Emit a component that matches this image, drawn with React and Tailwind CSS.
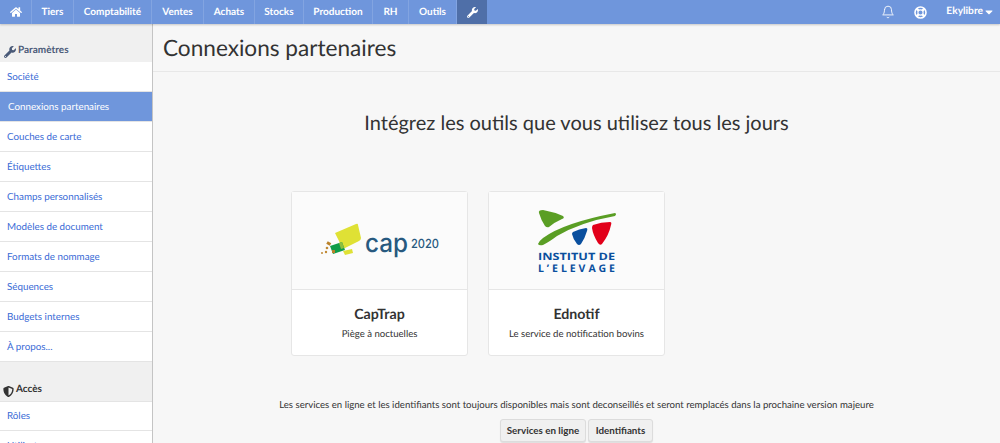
import React from "react";
import { FaHome, FaWrench, FaShieldAlt, FaCaretDown } from "react-icons/fa";
import { LuBell } from "react-icons/lu";

const nav = [
  ["Tiers", "w-[42px]"],
  ["Comptabilité", "w-[78px]"],
  ["Ventes", "w-[52px]"],
  ["Achats", "w-[51px]"],
  ["Stocks", "w-[49px]"],
  ["Production", "w-[69px]"],
  ["RH", "w-[36px]"],
  ["Outils", "w-[48px]"],
];
const links = ["Société", "Connexions partenaires", "Couches de carte", "Étiquettes", "Champs personnalisés", "Modèles de document", "Formats de nommage", "Séquences", "Budgets internes", "À propos..."];

function Ring() {
  return (
    <svg width="13" height="13" viewBox="0 0 13 13" className="mr-[19px]" fill="none" stroke="#fff">
      <circle cx="6.5" cy="6.5" r="5.5" strokeWidth="1.6" />
      <circle cx="6.5" cy="6.5" r="2.6" strokeWidth="1.1" />
      <path d="M2.6 2.6 L4.6 4.6 M10.4 2.6 L8.4 4.6 M2.6 10.4 L4.6 8.4 M10.4 10.4 L8.4 8.4" strokeWidth="2.2" />
    </svg>
  );
}

function CapLogo() {
  return (
    <svg width="130" height="44" viewBox="0 0 130 44">
      <path d="M20 14 L41 5 Q43 4 43 6 L46 19 Q46 21 44 22 L30 29 Q28 30 27 28 Z" fill="#dfe135" />
      <path d="M15 27 L27 23 L30 31 L18 35 Z" fill="#0f9d48" />
      <path d="M24 24 L27 23 L29 29 L26 30 Z" fill="#8fbf3c" />
      <path d="M28 32 L37 30 L38 34 L30 36 Z" fill="#dfe135" />
      <rect x="12" y="23" width="4" height="3" fill="#b9822b" transform="rotate(30 14 24)" />
      <rect x="17" y="31" width="3" height="3" fill="#b9822b" />
      <circle cx="12" cy="29" r="1.3" fill="#c08a35" />
      <circle cx="11" cy="33" r="1.2" fill="#c08a35" />
      <circle cx="7" cy="34" r="1" fill="#c08a35" />
      <text x="50" y="33" fontFamily="Inter, sans-serif" fontSize="26" fontWeight="500" fill="#27597f" textLength="43" lengthAdjust="spacingAndGlyphs">cap</text>
      <text x="96" y="29" fontFamily="Inter, sans-serif" fontSize="12.5" fontWeight="500" fill="#27597f" textLength="28" lengthAdjust="spacingAndGlyphs">2020</text>
    </svg>
  );
}

function IdeleLogo() {
  return (
    <svg width="80" height="64" viewBox="0 0 80 64">
      <path d="M2 4 Q1 1 6 1 Q17 3 26 7 Q28 9 25 10 Q18 13 12 18 Q10 19 8 17 Q4 11 2 4 Z" fill="#5a9e24" />
      <path d="M1 35 Q2 32 6 29 Q26 14 78 4 Q80 5 78 7 Q44 13 20 27 Q12 33 6 36 Q2 37 1 35 Z" fill="#5a9e24" />
      <path d="M36 23 Q42 20 49 19 Q51 19 50 22 Q48 29 44 35 Q42 37 40 35 Q36 30 35 25 Q35 24 36 23 Z" fill="#0a4f9e" />
      <path d="M56 16 Q64 13 73 13 Q75 13 74 16 Q72 26 65 35 Q63 37 61 34 Q56 26 55 19 Q55 17 56 16 Z" fill="#e2001a" />
      <text x="1" y="51" fontFamily="'Open Sans', sans-serif" fontWeight="700" fontSize="10" fill="#0a4f9e" textLength="77" lengthAdjust="spacingAndGlyphs">INSTITUT DE</text>
      <text x="1" y="63" fontFamily="'Open Sans', sans-serif" fontWeight="700" fontSize="10.5" fill="#0a4f9e" textLength="77">L’ELEVAGE</text>
    </svg>
  );
}

function Card({ logo, title, desc }) {
  return (
    <div className="w-[177px] h-[165px] bg-white border border-[#e6e6e6] rounded-[3px] flex flex-col">
      <div className="h-[98px] bg-[#fbfbfb] border-b border-[#e6e6e6] flex items-center justify-center shrink-0">{logo}</div>
      <div className="flex flex-col items-center pt-[15px]">
        <div className="text-[14.2px] leading-[20px] font-bold text-[#333]">{title}</div>
        <div className="text-[9.6px] leading-[16px] mt-[2px] text-[#333]">{desc}</div>
      </div>
    </div>
  );
}

export default function App() {
  return (
    <div className="w-[1000px] h-[443px] overflow-hidden flex flex-col bg-[#f7f7f7] text-[#333] [text-rendering:geometricPrecision]" style={{ fontFamily: "Lato, sans-serif" }}>
      <header className="h-[24px] shrink-0 bg-[#6f96dc] flex items-stretch text-white text-[10px] font-bold shadow-[0_1px_2px_rgba(0,0,0,0.2)] relative z-10">
        <div className="w-[32px] flex items-center justify-center border-r border-[#82a4e1]"><FaHome className="text-[12px]" /></div>
        {nav.map(([n, w]) => (
          <div key={n} className={`${w} flex items-center justify-center border-r border-[#82a4e1]`}>{n}</div>
        ))}
        <div className="w-[30px] flex items-center justify-center bg-[#4f6fa8]"><FaWrench className="text-[11px]" /></div>
        <div className="flex-1" />
        <div className="flex items-center">
          <LuBell className="text-[14px] mr-[19px]" strokeWidth={1.5} />
          <Ring />
          <span className="text-[10.2px]">Ekylibre</span>
          <FaCaretDown className="text-[12px] mr-[5px]" />
        </div>
      </header>

      <div className="flex-1 flex min-h-0">
        <aside className="w-[153px] shrink-0 bg-[#f0f0f0] border-r border-[#c4c4c4] overflow-hidden text-[9.8px]">
          <div className="h-[38px] flex items-end pb-[4px] pl-[4px] gap-[2px] font-bold text-[#4a5a78] text-[10px]">
            <FaWrench className="text-[12px]" /><span>Paramètres</span>
          </div>
          {links.map((l) => {
            const active = l === "Connexions partenaires";
            return (
              <div key={l} className={`h-[30px] flex items-center border-b border-[#e4e4e4] pt-[1px] ${active ? "bg-[#6f96dc] text-white pl-[8px]" : "bg-white text-[#3a6bd6] pl-[7px]"}`}>{l}</div>
            );
          })}
          <div className="h-[39px] flex items-end pb-[4px] pl-[3px] gap-[2px] font-bold text-[#333] text-[10px]">
            <FaShieldAlt className="text-[11px]" /><span>Accès</span>
          </div>
          <div className="h-[30px] flex items-center bg-white text-[#3a6bd6] pl-[7px] border-b border-t border-[#e4e4e4] pt-[1px]">Rôles</div>
          <div className="h-[30px] flex items-center bg-white text-[#3a6bd6] pl-[7px]">Utilisateurs</div>
        </aside>

        <main className="flex-1 min-w-0 flex flex-col">
          <div className="h-[48px] shrink-0 border-b border-[#e8e8e8] flex items-center pl-[10px] text-[22.6px] text-[#333]">Connexions partenaires</div>
          <h2 className="text-[20px] leading-[28px] text-center mt-[37px] text-[#333]">Intégrez les outils que vous utilisez tous les jours</h2>
          <div className="flex gap-[20px] mt-[54px] pl-[138px]">
            <Card logo={<CapLogo />} title="CapTrap" desc="Piège à noctuelles" />
            <Card logo={<IdeleLogo />} title="Ednotif" desc="Le service de notification bovins" />
          </div>
          <p className="text-[9.63px] leading-[14px] text-center mt-[42px] text-[#333]">Les services en ligne et les identifiants sont toujours disponibles mais sont deconseillés et seront remplacés dans la prochaine version majeure</p>
          <div className="flex justify-center gap-[2px] mt-[7px]">
            <button className="h-[23px] w-[86px] rounded-[3px] bg-[#f0f0f0] border border-[#dcdcdc] text-[9.8px] font-bold text-[#333] shadow-[0_1px_1px_rgba(0,0,0,0.1)]">Services en ligne</button>
            <button className="h-[23px] w-[65px] rounded-[3px] bg-[#f0f0f0] border border-[#dcdcdc] text-[9.8px] font-bold text-[#333] shadow-[0_1px_1px_rgba(0,0,0,0.1)]">Identifiants</button>
          </div>
        </main>
      </div>
    </div>
  );
}
